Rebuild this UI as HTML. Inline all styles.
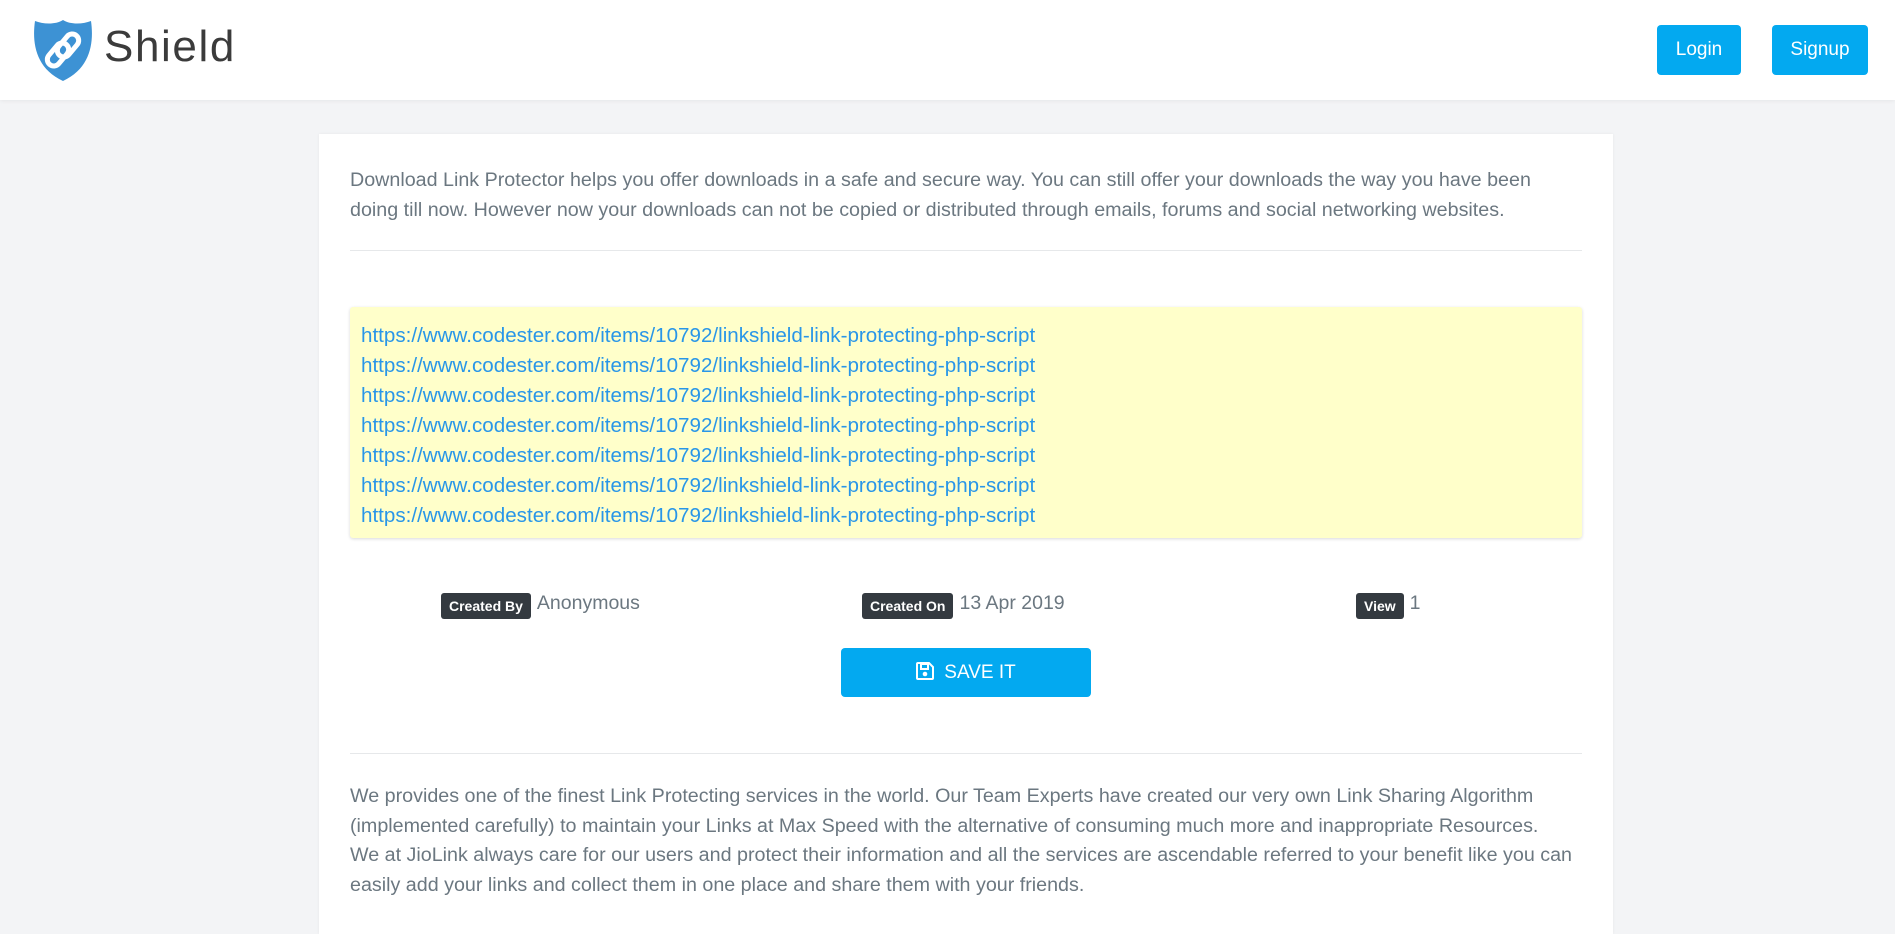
<!DOCTYPE html>
<html><head><meta charset="utf-8"><style>
*{margin:0;padding:0;box-sizing:border-box}
body{width:1895px;height:878px;overflow:hidden;background:#f3f4f6;font-family:"Liberation Sans",sans-serif;color:#6b7780}
.hdr{position:absolute;left:0;top:0;width:1895px;height:100px;background:#fff;box-shadow:0 1px 4px rgba(0,0,0,.06)}
.logo{position:absolute;left:33px;top:20px}
.brand{position:absolute;left:104px;top:22px;font-size:44px;color:#3b3b3b;letter-spacing:1.6px}
.btn{position:absolute;top:25px;height:50px;background:#03a9f0;color:#fff;border-radius:4px;font-size:19px;line-height:50px;text-align:center}
.card{position:absolute;left:319px;top:134px;width:1294px;height:800px;background:#fff;box-shadow:0 0 3px rgba(0,0,0,.06)}
.p{position:absolute;left:31px;font-size:19.7px;line-height:29.5px;white-space:nowrap}
.hr{position:absolute;left:31px;width:1232px;height:1px;background:#e6e8ea}
.yb{position:absolute;left:31px;top:173px;width:1232px;height:231px;background:#ffffca;border-radius:3px;box-shadow:0 1px 3px rgba(0,0,0,.15);padding:14px 11px;font-size:20.6px;line-height:30px;color:#2996e8;white-space:nowrap}
.meta{position:absolute;top:456px;font-size:19.5px;line-height:26px;white-space:nowrap}
.bd{display:inline-block;background:#343a40;color:#fff;font-size:14px;font-weight:bold;padding:0 8px;height:26px;line-height:26px;border-radius:3px;vertical-align:middle;margin-right:6px;position:relative;top:2px}
.save{position:absolute;left:522px;top:514px;width:250px;height:49px;background:#03a9f0;color:#fff;border-radius:4px;font-size:19px;line-height:49px;text-align:center}
</style></head><body>
<div class="hdr">
<svg class="logo" width="60" height="61" viewBox="0 0 60 61"><path d="M30 0C22 5 10 4 2 1C-1 22 2 48 30 61C58 48 61 22 58 1C50 4 38 5 30 0Z" fill="#3d92d4"/><g fill="none" stroke="#fff" stroke-width="5"><rect x="12" y="28" width="26" height="13" rx="6.5" transform="rotate(-50 25 34.5)"/><rect x="22" y="19" width="26" height="13" rx="6.5" transform="rotate(-50 35 25.5)"/></g></svg>
<div class="brand">Shield</div>
<div class="btn" style="left:1657px;width:84px">Login</div>
<div class="btn" style="left:1772px;width:96px">Signup</div>
</div>
<div class="card">
<div class="p" style="top:32px">Download Link Protector helps you offer downloads in a safe and secure way. You can still offer your downloads the way you have been<br>doing till now. However now your downloads can not be copied or distributed through emails, forums and social networking websites.</div>
<div class="hr" style="top:116px"></div>
<div class="yb">https://www.codester.com/items/10792/linkshield-link-protecting-php-script<br>https://www.codester.com/items/10792/linkshield-link-protecting-php-script<br>https://www.codester.com/items/10792/linkshield-link-protecting-php-script<br>https://www.codester.com/items/10792/linkshield-link-protecting-php-script<br>https://www.codester.com/items/10792/linkshield-link-protecting-php-script<br>https://www.codester.com/items/10792/linkshield-link-protecting-php-script<br>https://www.codester.com/items/10792/linkshield-link-protecting-php-script</div>
<div class="meta" style="left:122px"><span class="bd">Created By</span>Anonymous</div>
<div class="meta" style="left:543px"><span class="bd">Created On</span>13 Apr 2019</div>
<div class="meta" style="left:1037px"><span class="bd">View</span>1</div>
<div class="save"><svg width="18" height="18" viewBox="0 0 18 18" style="vertical-align:-2px;margin-right:10px"><path d="M2 1H13L17 5V16A1 1 0 0 1 16 17H2A1 1 0 0 1 1 16V2A1 1 0 0 1 2 1Z" fill="none" stroke="#fff" stroke-width="2"/><rect x="5" y="2" width="7" height="5" fill="none" stroke="#fff" stroke-width="2"/><circle cx="9" cy="12" r="2.3" fill="#fff"/></svg>SAVE IT</div>
<div class="hr" style="top:619px"></div>
<div class="p" style="top:648px">We provides one of the finest Link Protecting services in the world. Our Team Experts have created our very own Link Sharing Algorithm<br>(implemented carefully) to maintain your Links at Max Speed with the alternative of consuming much more and inappropriate Resources.<br>We at JioLink always care for our users and protect their information and all the services are ascendable referred to your benefit like you can<br>easily add your links and collect them in one place and share them with your friends.</div>
</div>
</body></html>
